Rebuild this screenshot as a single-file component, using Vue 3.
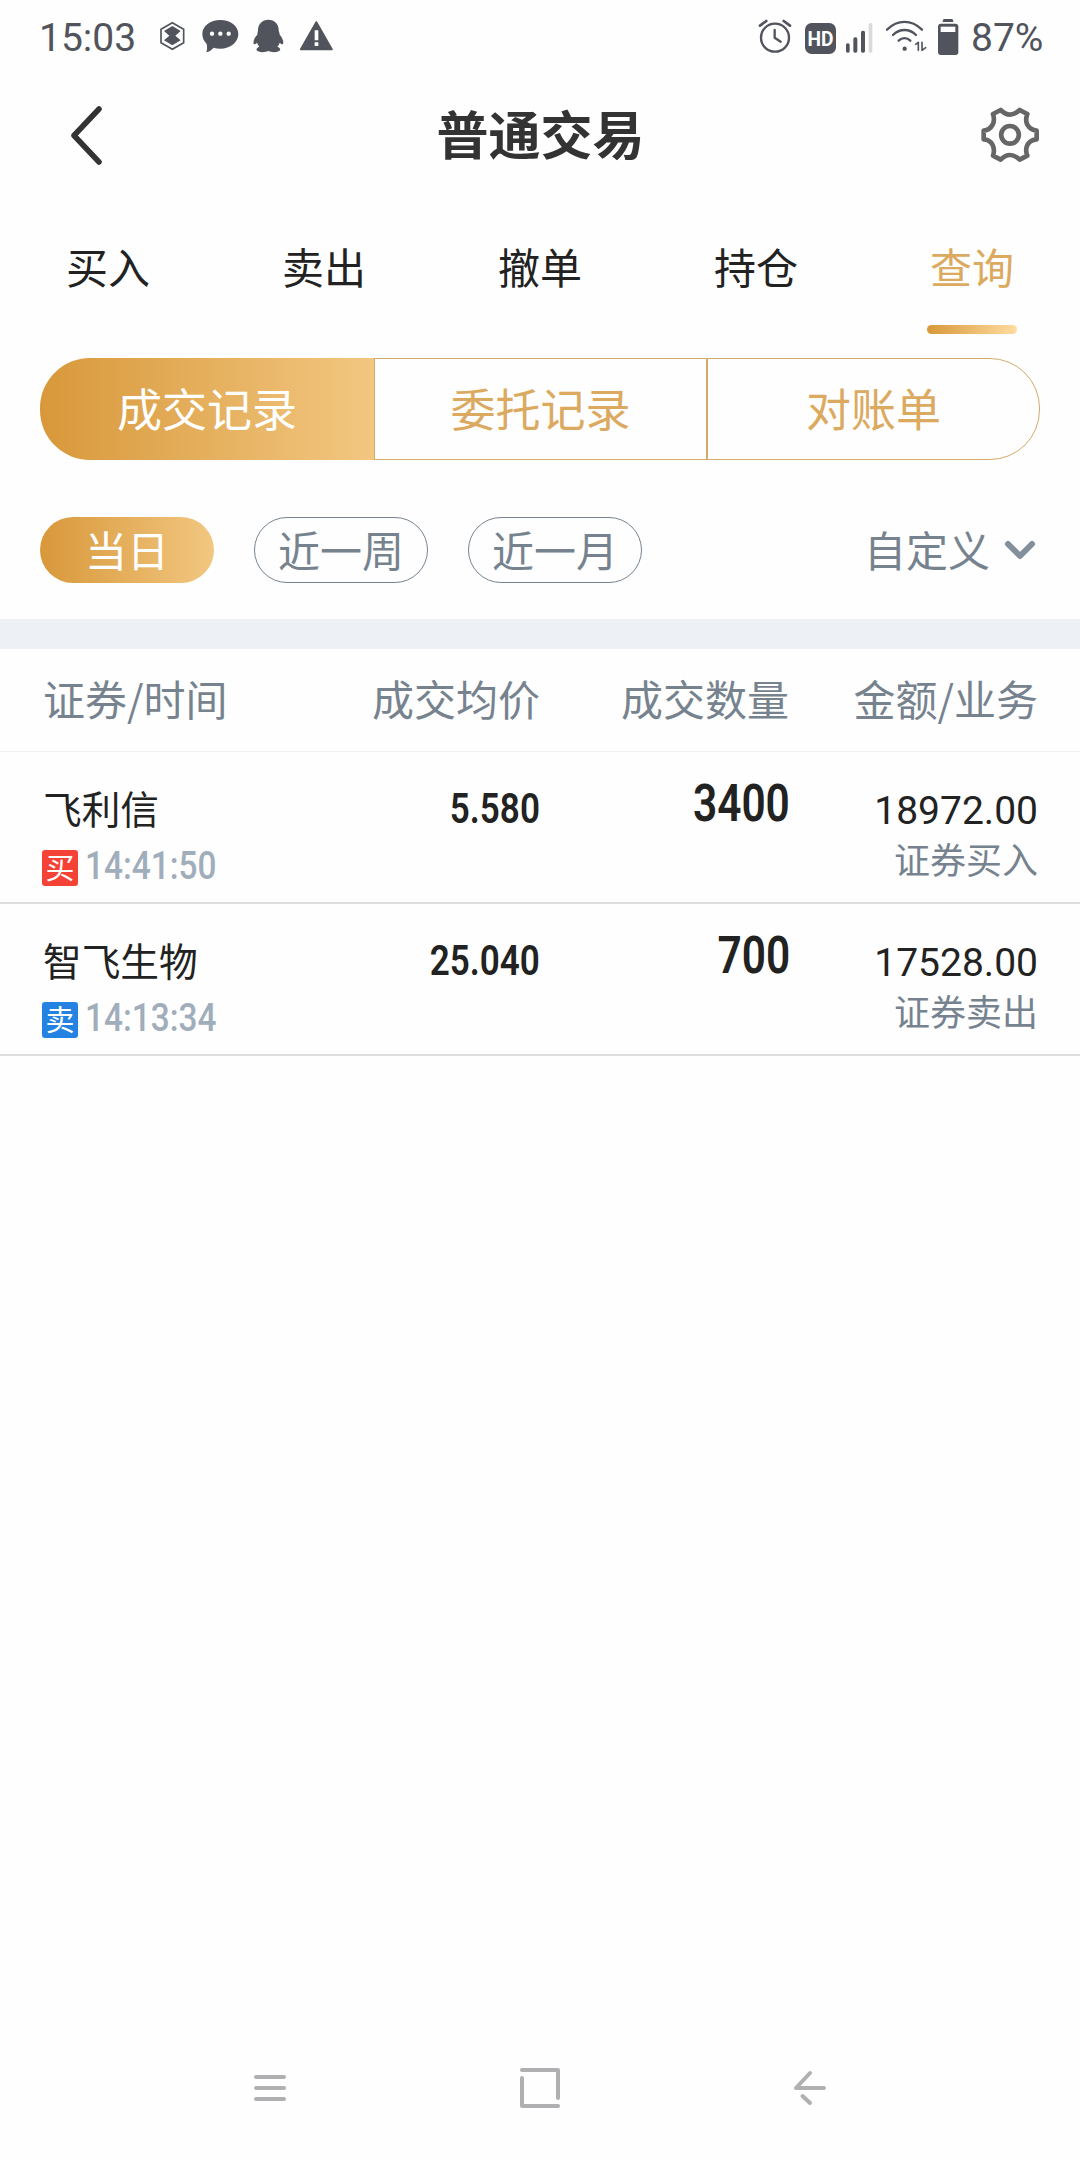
<script setup>
const tabs = ['买入', '卖出', '撤单', '持仓', '查询']
const segments = ['成交记录', '委托记录', '对账单']
const ranges = ['当日', '近一周', '近一月']
const columns = ['证券/时间', '成交均价', '成交数量', '金额/业务']
const records = [
  { name: '飞利信', side: 'buy', mark: '买', time: '14:41:50', price: '5.580', qty: '3400', amount: '18972.00', kind: '证券买入' },
  { name: '智飞生物', side: 'sell', mark: '卖', time: '14:13:34', price: '25.040', qty: '700', amount: '17528.00', kind: '证券卖出' },
]
</script>

<template>
  <div class="screen">
    <div class="status">
      <span class="clock">15:03</span>
      <div class="status-icons">
        <svg width="37" height="40" viewBox="410 51 111 120">
          <path d="M456 68L490 87.500V128.500L456 148L422 128.500V87.500Z" fill="none" stroke="#51545c" stroke-width="5" />
          <path d="M456 78L481 93L465 107L481 121L456 136L431 121L447 107L431 93Z" fill="#51545c" />
        </svg>
        <svg width="53" height="40" viewBox="521 51 159 120">
          <path d="M600 60C630 60 654 78 654 102C654 127 630 146 600 146C593 146 586 145 580 143C574 150 567 155 558 157C561 149 561 141 559 132C551 124 546 114 546 102C546 78 570 60 600 60Z" fill="#51545c" />
          <g fill="#fff"><circle cx="575" cy="101" r="6.500" /><circle cx="600" cy="101" r="6.500" /><circle cx="625" cy="101" r="6.500" /></g>
        </svg>
        <svg width="47" height="40" viewBox="680 51 141 120">
          <path d="M744 59C763 59 775 72 775 90C775 95 778 98 778 104C786 113 791 124 788 131C786 136 781 130 778 128C776 134 773 138 771 140C778 142 781 147 779 151C775 158 752 158 744 152C736 158 713 158 709 151C707 147 711 142 717 140C714 137 712 133 710 128C707 130 703 136 700 131C698 124 702 113 711 104C711 98 713 95 713 90C713 72 726 59 744 59Z" fill="#51545c" />
        </svg>
        <svg width="44" height="40" viewBox="821 51 132 120">
          <path d="M888 66L935 148H841Z" fill="#51545c" stroke="#51545c" stroke-width="5" stroke-linejoin="round" />
          <path d="M883 91H894V121H883ZM883 127H894V138H883Z" fill="#fff" />
        </svg>
      </div>
      <div class="status-icons end">
        <svg width="46" height="40" viewBox="42 51 138 120">
          <g fill="none" stroke="#51545c" stroke-linecap="round">
            <circle cx="105" cy="113" r="42" stroke-width="7" />
            <path d="M104 90V113L122 125" stroke-width="7" stroke-linejoin="round" />
            <path d="M60 77L79 63M150 77L131 63" stroke-width="8" />
          </g>
        </svg>
        <svg width="40" height="40" viewBox="180 51 120 120">
          <rect x="195" y="69" width="93" height="93" rx="20" fill="#51545c" />
          <text x="241.500" y="137" class="hd" text-anchor="middle" textLength="78" lengthAdjust="spacingAndGlyphs">HD</text>
        </svg>
        <svg width="40" height="40" viewBox="300 51 120 120">
          <g fill="#51545c"><rect x="318" y="130" width="11" height="28" rx="5" /><rect x="340" y="112" width="12" height="46" rx="5" /><rect x="363" y="92" width="12" height="66" rx="5" /></g>
          <rect x="386" y="69" width="11" height="89" rx="5" fill="#dadadc" />
        </svg>
        <svg width="53" height="40" viewBox="420 51 159 120">
          <g fill="none" stroke="#51545c" stroke-width="7" stroke-linecap="round">
            <path d="M441 89C473 58 514 58 546 89M459 105C479 85 508 85 528 105M476 122C486 112 501 112 511 122" />
            <path d="M527 133L535 127V151M546 127V151L557 143" stroke-width="5" stroke-linejoin="round" />
          </g>
          <circle cx="494" cy="146" r="6.500" fill="#51545c" />
        </svg>
        <svg width="30" height="40" viewBox="579 51 90 120">
          <path d="M612 57H636Q640 57 640 66H608Q608 57 612 57Z" fill="#51545c" />
          <rect x="594" y="71" width="61" height="94" rx="9" fill="#51545c" />
          <path d="M602 80H646V96H602Z" fill="#fff" />
        </svg>
      </div>
      <span class="level">87%</span>
    </div>

    <header class="titlebar">
      <svg class="back" width="36" height="60" viewBox="0 0 36 60">
        <path d="M31 4L6 30.500L31 57" fill="none" stroke="#333" stroke-width="5.500" stroke-linecap="round" stroke-linejoin="round" />
      </svg>
      <h1>普通交易</h1>
      <svg class="gear" width="60" height="58" viewBox="61 48 180 174">
        <g fill="none" stroke="#666" stroke-width="14" stroke-linejoin="round">
          <path d="M123 60Q137 74 151 74Q165 74 180 60L203 72Q196 90 203 104Q212 120 231 122V148Q212 149 203 165Q196 180 203 197L180 209Q165 195 151 195Q137 195 123 209L100 197Q106 180 99 165Q91 149 72 148V122Q91 120 99 104Q106 90 100 72Z" />
          <circle cx="151" cy="134.500" r="26.500" />
        </g>
      </svg>
    </header>

    <nav class="tabs">
      <span v-for="(t, i) in tabs" :key="t" class="tab" :class="{ active: i === 4 }">{{ t }}</span>
    </nav>

    <div class="segments">
      <span v-for="(s, i) in segments" :key="s" class="segment" :class="{ active: i === 0 }">{{ s }}</span>
    </div>

    <div class="ranges">
      <span v-for="(r, i) in ranges" :key="r" class="pill" :class="{ active: i === 0 }">{{ r }}</span>
      <span class="custom">自定义</span>
      <svg width="32" height="20" viewBox="0 0 32 20">
        <path d="M4 4L16 16L28 4" fill="none" stroke="#838f9b" stroke-width="6" stroke-linecap="round" stroke-linejoin="round" />
      </svg>
    </div>

    <div class="band"></div>

    <div class="grid head">
      <span v-for="c in columns" :key="c">{{ c }}</span>
    </div>

    <div v-for="r in records" :key="r.name" class="grid row">
      <div class="stock">
        <div class="name">{{ r.name }}</div>
        <div class="when">
          <span class="mark" :class="r.side">{{ r.mark }}</span>
          <span class="time">{{ r.time }}</span>
        </div>
      </div>
      <div class="price"><span>{{ r.price }}</span></div>
      <div class="qty"><span>{{ r.qty }}</span></div>
      <div class="money">
        <div class="amount">{{ r.amount }}</div>
        <div class="kind">{{ r.kind }}</div>
      </div>
    </div>

    <footer class="sysnav">
      <svg width="44" height="44" viewBox="0 0 44 44"><path d="M8 11H36M8 22H36M8 33H36" /></svg>
      <svg width="44" height="44" viewBox="0 0 44 44"><path d="M4 4H40V32M4 12V40H40" /></svg>
      <svg width="44" height="44" viewBox="0 0 44 44"><path d="M36 22H8L22 7M14.500 30L22 37" /></svg>
    </footer>
  </div>
</template>

<style>
body {
  background: #fefefe;
}
</style>

<style scoped>
.screen {
  width: 1080px;
  height: 2160px;
  display: flex;
  flex-direction: column;
  background: #fefefe;
  color: #222;
  font-family: "Noto Sans CJK SC", sans-serif;
  overflow: hidden;
}
svg {
  display: block;
  flex: none;
}
.status {
  height: 74px;
  display: flex;
  align-items: center;
  padding: 0 37px 0 39px;
  color: #51545c;
  font: 39px/46px Roboto, sans-serif;
}
.clock {
  width: 118px;
  padding-top: 2px;
}
.status-icons {
  display: flex;
}
.end {
  margin-left: auto;
}
.level {
  width: 72px;
  margin-left: 8px;
  padding-top: 2px;
}
.hd {
  font: 700 60px Roboto, sans-serif;
  fill: #fff;
}
.titlebar {
  height: 122px;
  display: flex;
  align-items: center;
  padding: 0 40px 0 68px;
}
h1 {
  flex: 1;
  margin: 0;
  padding: 0 0 5px;
  text-align: center;
  text-indent: -3px;
  color: #333;
  font-size: 52px;
  line-height: 60px;
  font-weight: 700;
}
.tabs {
  display: flex;
  height: 138px;
}
.tab {
  flex: 1;
  position: relative;
  text-align: center;
  font-size: 42px;
  line-height: 140px;
}
.tab.active {
  color: #dbaa60;
}
.tab.active::after {
  content: "";
  position: absolute;
  left: 63px;
  bottom: 0;
  width: 90px;
  height: 9px;
  border-radius: 5px;
  background: linear-gradient(90deg, #d8983a, #ffdca0);
}
.segments {
  display: grid;
  grid-template-columns: 334px 333px 333px;
  margin: 24px 40px 0;
  height: 102px;
}
.segment {
  box-sizing: border-box;
  border: 1px solid #d3ab68;
  text-align: center;
  color: #dbaa60;
  font-size: 45px;
  line-height: 97px;
}
.segment:first-child {
  border-radius: 50px 0 0 50px;
}
.segment:last-child {
  border-radius: 0 50px 50px 0;
}
.segment.active,
.pill.active {
  border: 0;
  color: #fff;
  background: linear-gradient(90deg, #d8983a, #f2c781);
}
.segment.active {
  line-height: 99px;
}
.ranges {
  display: flex;
  align-items: center;
  height: 66px;
  margin: 57px 44px 0 40px;
  color: #76838f;
  font-size: 42px;
}
.pill {
  width: 174px;
  height: 66px;
  box-sizing: border-box;
  margin-right: 40px;
  border: 1px solid #76838f;
  border-radius: 33px;
  text-align: center;
  line-height: 61px;
}
.pill.active {
  line-height: 63px;
}
.custom {
  margin: 0 14px 3px auto;
  line-height: 62px;
}
.band {
  height: 30px;
  margin-top: 36px;
  background: #edf1f5;
}
.grid {
  display: grid;
  grid-template-columns: 250px 247px 249px 249px;
  padding: 0 42px 0 43px;
  text-align: right;
}
.grid > :first-child {
  text-align: left;
}
.head {
  height: 102px;
  border-bottom: 1px solid #eee;
  color: #76838f;
  font-size: 42px;
  line-height: 98px;
}
.row {
  height: 150px;
  border-bottom: 2px solid #ddd;
}
.name {
  margin-top: 28px;
  font-size: 38.7px;
  line-height: 55px;
}
.when {
  display: flex;
  margin: 15px 0 0 -1px;
}
.mark {
  width: 36px;
  height: 36px;
  border-radius: 3px;
  color: #fff;
  font-size: 29px;
  line-height: 32px;
  text-align: center;
}
.buy {
  background: #f44336;
}
.sell {
  background: #2382e2;
}
.time {
  margin-left: 7px;
  color: #a0adba;
  font: 500 39.5px/31px Roboto, sans-serif;
  transform: scaleX(0.845);
  transform-origin: left;
}
.price span,
.qty span {
  display: inline-block;
  transform: scaleX(0.835);
  transform-origin: right;
}
.price {
  margin-top: 32px;
  font: 600 42px/50px Roboto, sans-serif;
}
.qty {
  margin-top: 27px;
  font: 600 52px/50px Roboto, sans-serif;
}
.qty span {
  transform: translateX(1px) scaleX(0.815);
}
.amount {
  margin-top: 34px;
  font: 39px/50px Roboto, sans-serif;
}
.kind {
  color: #76838f;
  font-size: 36px;
  line-height: 45px;
}
.sysnav {
  display: flex;
  justify-content: space-between;
  margin: auto 248px 50px;
}
.sysnav path {
  fill: none;
  stroke: #b0b0b3;
  stroke-width: 4;
  stroke-linecap: round;
  stroke-linejoin: round;
}
</style>
